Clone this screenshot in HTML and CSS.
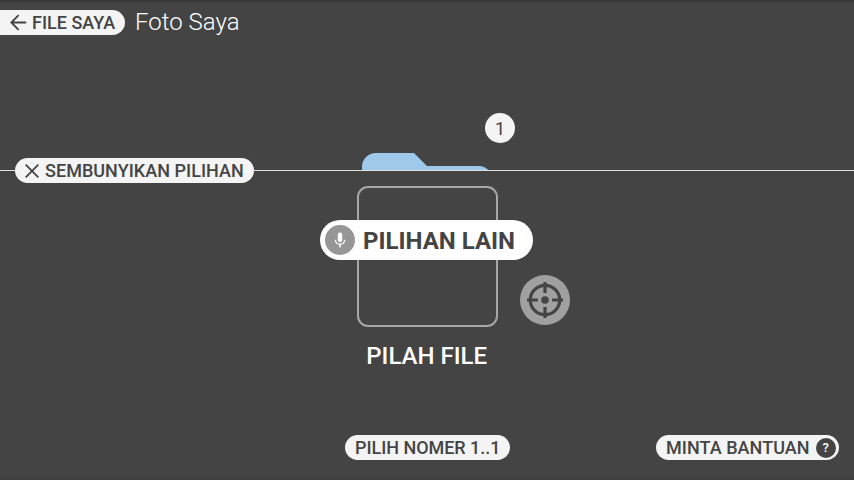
FILE: index.html
```html
<!DOCTYPE html>
<html lang="id">
<head>
<meta charset="utf-8">
<title>Foto Saya</title>
<link rel="stylesheet" href="styles.css">
</head>
<body>
<div class="screen">
  <header class="header">
    <button class="pill pill-back">
      <svg class="icon-back" viewBox="0 0 17 17"><path d="M16.200 8.500H1.400M8.600 1.200L1.300 8.500l7.300 7.300"/></svg>
      <span>FILE SAYA</span>
    </button>
    <h1 class="title">Foto Saya</h1>
  </header>
  <section class="files">
    <div class="folder">
      <svg class="folder-shape" viewBox="0 0 130 104"><path d="M0 14A14 14 0 0 1 14 0H52L65 13H117A13 13 0 0 1 130 26V104H0Z"/></svg>
      <span class="number">1</span>
    </div>
  </section>
  <section class="options">
    <button class="pill pill-hide">
      <svg class="icon-close" viewBox="0 0 14 14"><path d="M.7.7l12.600 12.600M13.300.7L.7 13.300"/></svg>
      <span class="hide-text">SEMBUNYIKAN PILIHAN</span>
    </button>
    <div class="option">
      <div class="frame">
        <button class="command">
          <span class="mic"><svg viewBox="0 0 24 24"><path d="M12 14.500a3 3 0 0 0 3-3V5a3 3 0 0 0-6 0v6.500a3 3 0 0 0 3 3zM17.300 11.500a5.300 5.300 0 0 1-10.600 0H5a7 7 0 0 0 6 6.700V22h2v-3.800a7 7 0 0 0 6-6.700z"/></svg></span>
          <span class="command-text">PILIHAN LAIN</span>
        </button>
        <svg class="target" viewBox="0 0 50 50">
          <circle class="disc" cx="25" cy="25" r="25"/>
          <circle class="ring" cx="25" cy="25" r="14.700"/>
          <path class="ring" d="M25 7v11M25 32v11M7 25h11M32 25h11"/>
          <circle class="dot" cx="25" cy="25" r="3.800"/>
        </svg>
      </div>
      <div class="option-label">PILAH FILE</div>
    </div>
    <footer class="footer">
      <button class="pill pill-number">PILIH NOMER 1..1</button>
      <button class="pill pill-help"><span class="help-text">MINTA BANTUAN</span><span class="help">?</span></button>
    </footer>
  </section>
</div>
</body>
</html>
```
FILE: styles.css
```css
* { box-sizing: border-box; }
body { margin: 0; background: #444; font-family: Roboto, "Liberation Sans", sans-serif; }
button { border: 0; padding: 0; font: inherit; color: inherit; white-space: nowrap; }
svg { display: block; flex: none; }
.screen { width: 854px; height: 480px; overflow: hidden; display: flex; flex-direction: column; background: linear-gradient(#353535 0, #3c3c3c 2px, #444 4px, #444 476px, #413e40 478px, #413e40 480px); }
.header { display: flex; height: 45px; padding-top: 10px; align-items: flex-start; gap: 10px; }
.pill { display: flex; align-items: center; height: 25px; border-radius: 13px; background: #f4f4f4; color: #444; font-size: 18px; font-weight: 500; line-height: 25px; }
.pill-back { width: 125px; padding-left: 10px; gap: 5px; border-radius: 0 13px 13px 0; }
.icon-back { width: 17px; height: 17px; fill: none; stroke: #444; stroke-width: 1.8; }
.title { margin: 0; color: #fff; font-size: 24px; font-weight: 300; line-height: 25px; }
.files { height: 125px; padding: 108px 0 0 362px; overflow: hidden; }
.folder { position: relative; width: 130px; height: 104px; }
.folder-shape { width: 130px; height: 104px; fill: #9fc9eb; }
.number { position: absolute; left: 123px; top: -39.6px; width: 30px; height: 30px; border-radius: 50%; background: #f4f4f4; color: #444; font-size: 18px; line-height: 32px; text-align: center; }
.options { position: relative; flex: 1; border-top: 1px solid #e1e1df; display: flex; flex-direction: column; }
.pill-hide { position: absolute; left: 15px; top: -13px; width: 239px; padding-left: 10px; gap: 6px; }
.hide-text { letter-spacing: 0.03px; }
.icon-close { width: 14px; height: 14px; fill: none; stroke: #444; stroke-width: 1.8; }
.option { width: 141px; margin: 15px 0 0 357px; height: 249px; }
.frame { position: relative; width: 141px; height: 141px; border: 2px solid #a7a7a7; border-radius: 11px; }
.command { position: absolute; left: -39px; top: 32px; width: 213px; height: 40px; border-radius: 20px; background: #fff; color: #444; display: flex; align-items: center; padding-left: 5px; gap: 8px; font-size: 24px; font-weight: 700; line-height: 38px; }
.command-text { padding-top: 2px; }
.mic { width: 30px; height: 30px; border-radius: 50%; background: #969696; display: flex; align-items: center; justify-content: center; }
.mic svg { width: 18px; height: 18px; fill: #fff; }
.target { position: absolute; left: 161px; top: 87px; width: 50px; height: 50px; }
.disc { fill: #a0a0a0; }
.ring { fill: none; stroke: #444; stroke-width: 3.2; }
.dot { fill: #444; }
.option-label { margin-top: 15px; padding-left: 9.3px; color: #fff; font-size: 24px; font-weight: 500; line-height: 28px; white-space: nowrap; }
.footer { display: flex; justify-content: space-between; padding: 0 15px 0 345px; }
.pill-number { width: 165px; padding-left: 10px; letter-spacing: -0.04px; }
.pill-help { width: 183px; padding-left: 10px; gap: 6px; }
.help-text { letter-spacing: 0.05px; }
.help { width: 20px; height: 20px; border-radius: 50%; background: #444; color: #fff; font-size: 13px; line-height: 20px; text-align: center; }
```
